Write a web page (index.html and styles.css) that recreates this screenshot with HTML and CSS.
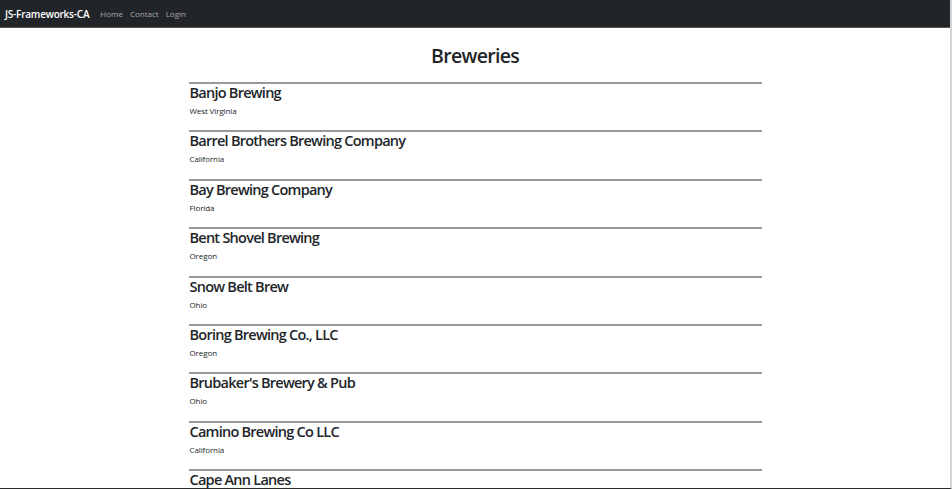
FILE: index.html
```html
<!DOCTYPE html>
<html lang="en">
<head>
<meta charset="utf-8">
<title>Breweries</title>
<link rel="stylesheet" href="styles.css">
</head>
<body>
<div class="frame">
  <nav class="navbar">
    <span class="brand">JS-Frameworks-CA</span>
    <a class="nav-link" href="#">Home</a>
    <a class="nav-link" href="#">Contact</a>
    <a class="nav-link" href="#">Login</a>
  </nav>
  <main class="container">
    <h1 class="page-title">Breweries</h1>
    <ul class="list">
      <li class="item"><h3 class="name">Banjo Brewing</h3><p class="state">West Virginia</p></li>
      <li class="item"><h3 class="name">Barrel Brothers Brewing Company</h3><p class="state">California</p></li>
      <li class="item"><h3 class="name">Bay Brewing Company</h3><p class="state">Florida</p></li>
      <li class="item"><h3 class="name">Bent Shovel Brewing</h3><p class="state">Oregon</p></li>
      <li class="item"><h3 class="name">Snow Belt Brew</h3><p class="state">Ohio</p></li>
      <li class="item"><h3 class="name">Boring Brewing Co., LLC</h3><p class="state">Oregon</p></li>
      <li class="item"><h3 class="name">Brubaker's Brewery &amp; Pub</h3><p class="state">Ohio</p></li>
      <li class="item"><h3 class="name">Camino Brewing Co LLC</h3><p class="state">California</p></li>
      <li class="item"><h3 class="name">Cape Ann Lanes</h3></li>
    </ul>
  </main>
</div>
</body>
</html>
```
FILE: styles.css
```css
* { box-sizing: border-box; }
html, body { margin: 0; padding: 0; background: #fff; }
body {
  font-family: "Open Sans", "Noto Sans", "Liberation Sans", sans-serif;
  color: #212529;
}
.frame {
  height: 489px;
  overflow: hidden;
  border-right: 2px solid #d4d4d4;
  border-bottom: 1px solid #2a2a2a;
}
.navbar {
  height: 28px;
  background: #212529;
  display: flex;
  align-items: center;
  padding: 0 5px;
  border-bottom: 1px solid #555;
}
.brand {
  color: #fff;
  font-size: 10px;
  font-weight: 600;
  margin-right: 11px;
  letter-spacing: -0.22px;
}
.nav-link {
  color: rgba(255,255,255,0.6);
  font-size: 8px;
  text-decoration: none;
  margin-right: 7px;
}
.container {
  width: 573px;
  margin: 0 auto;
}
.page-title {
  text-align: center;
  font-size: 19.5px;
  font-weight: 600;
  line-height: 24px;
  margin: 16px 0 14px;
  letter-spacing: -0.7px;
}
.list { list-style: none; margin: 0; padding: 0; }
.item {
  border-top: 2px solid #999;
  height: 48.4px;
  padding: 0 1px;
}
.name {
  margin: 0;
  font-size: 14.5px;
  font-weight: 600;
  line-height: 17px;
  letter-spacing: -0.75px;
}
.state {
  margin: 5px 0 0;
  font-size: 8px;
  line-height: 10px;
  letter-spacing: -0.1px;
}
```
